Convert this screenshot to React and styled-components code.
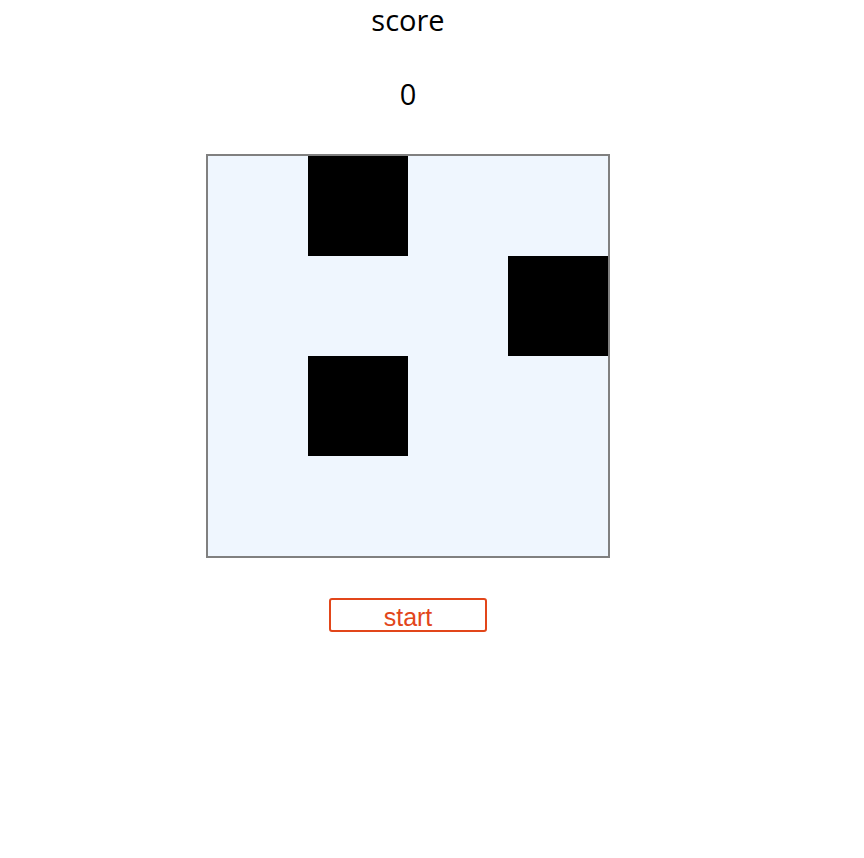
import React from "react";
import styled, { createGlobalStyle } from "styled-components";

const Global = createGlobalStyle`
  html, body { margin: 0; padding: 0; background: #ffffff; }
  body { padding: 0 8px; }
`;

const Page = styled.div`
  width: 800px;
  display: flex;
  flex-direction: column;
  align-items: center;
`;

const Label = styled.div`
  font-family: "Open Sans", "DejaVu Sans", sans-serif;
  font-size: 29px;
  line-height: 32px;
  color: #000;
  margin-top: ${(p) => p.$top}px;
`;

const Board = styled.div`
  margin-top: 44px;
  border: 2px solid #808080;
  background: #eff6fe;
  display: grid;
  grid-template-columns: repeat(4, 100px);
  grid-template-rows: repeat(4, 100px);
`;

const Cell = styled.div`
  background: ${(p) => (p.$on ? "#000000" : "transparent")};
`;

const StartButton = styled.button`
  margin-top: 40px;
  width: 158px;
  height: 34px;
  box-sizing: border-box;
  border: 2px solid #e2461a;
  border-radius: 3px;
  background: #ffffff;
  color: #e2461a;
  font-family: "Liberation Sans", Arial, sans-serif;
  font-size: 25px;
  line-height: 26px;
  padding: 4px 0 0 0;
  cursor: pointer;
`;

const grid = [
  [0, 1, 0, 0],
  [0, 0, 0, 1],
  [0, 1, 0, 0],
  [0, 0, 0, 0],
];

export default function App() {
  return (
    <>
      <Global />
      <Page>
        <Label $top={4}>score</Label>
        <Label $top={42}>0</Label>
        <Board>
          {grid.flat().map((v, i) => (
            <Cell key={i} $on={!!v} />
          ))}
        </Board>
        <StartButton>start</StartButton>
      </Page>
    </>
  );
}
